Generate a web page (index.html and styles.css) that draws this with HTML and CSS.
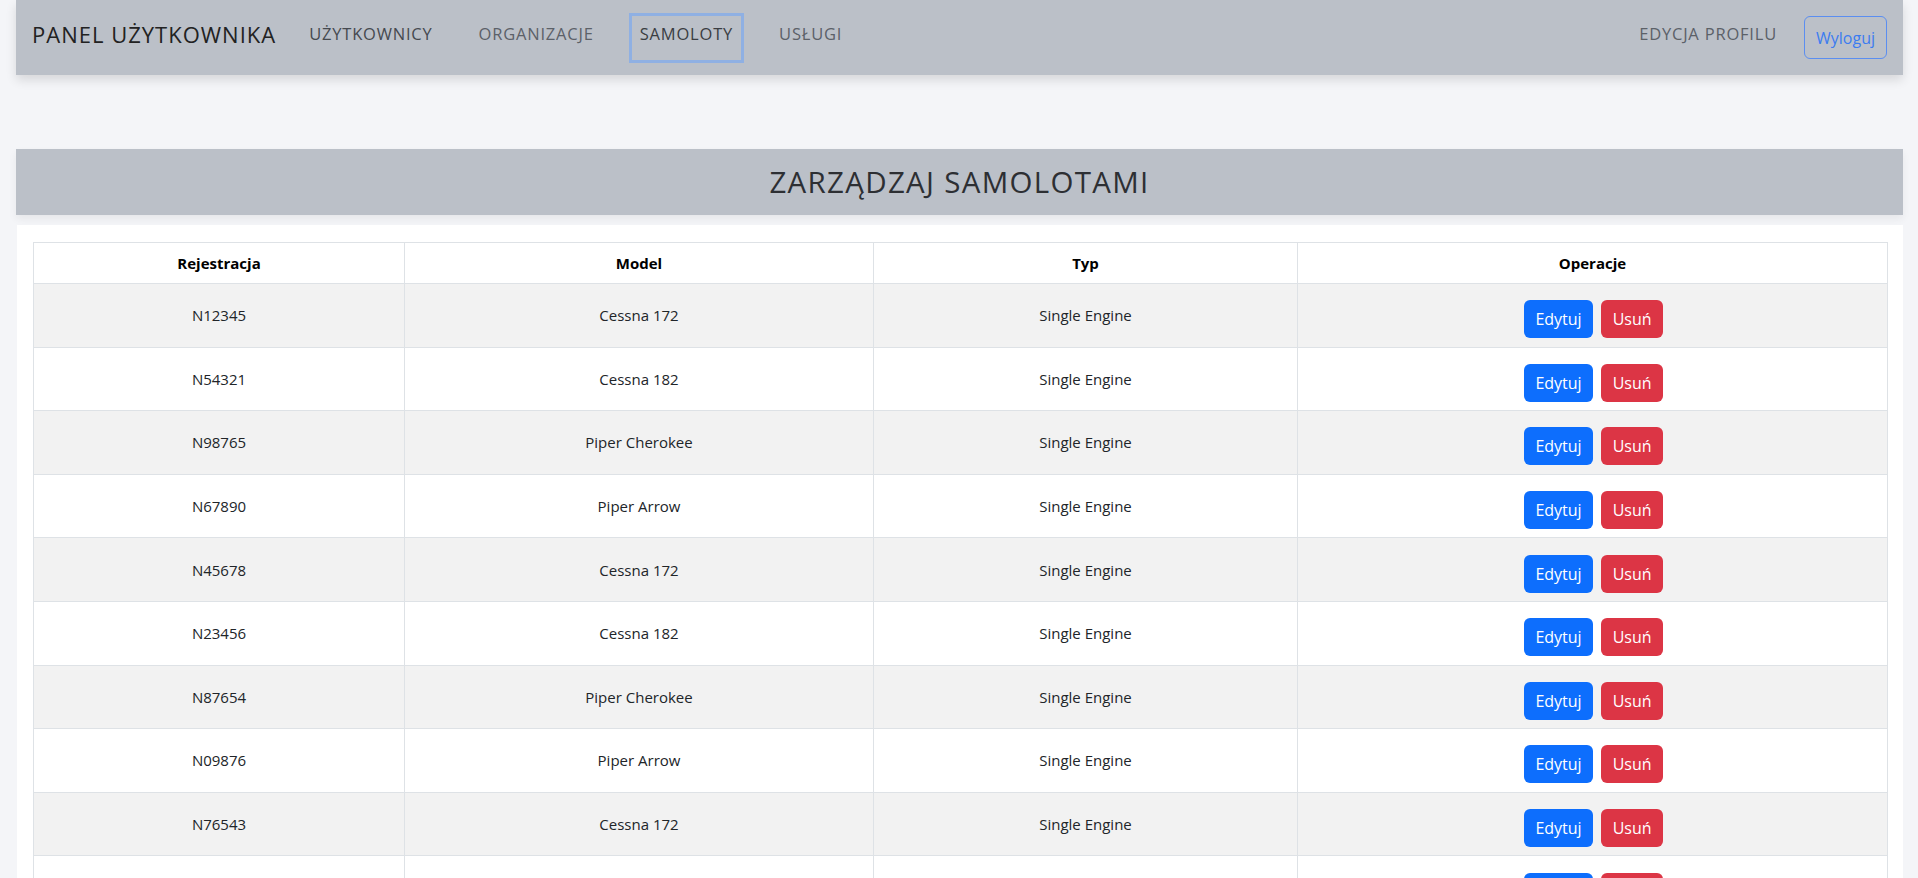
FILE: index.html
```html
<!DOCTYPE html>
<html lang="pl">
<head>
<meta charset="utf-8">
<title>Panel użytkownika</title>
<link rel="stylesheet" href="styles.css">
</head>
<body>
<div class="page">
  <nav class="navbar">
    <div class="nav-left">
      <span class="brand">PANEL UŻYTKOWNIKA</span>
      <a class="nav-link first">UŻYTKOWNICY</a>
      <a class="nav-link">ORGANIZACJE</a>
      <a class="nav-link active">SAMOLOTY</a>
      <a class="nav-link">USŁUGI</a>
    </div>
    <div class="nav-right">
      <a class="nav-link profile">EDYCJA PROFILU</a>
      <button class="logout">Wyloguj</button>
    </div>
  </nav>

  <header class="title-bar">
    <h1>ZARZĄDZAJ SAMOLOTAMI</h1>
  </header>

  <section class="card">
    <table class="planes">
      <colgroup>
        <col class="c1"><col class="c2"><col class="c3"><col class="c4">
      </colgroup>
      <thead>
        <tr><th>Rejestracja</th><th>Model</th><th>Typ</th><th>Operacje</th></tr>
      </thead>
      <tbody>
        <tr><td>N12345</td><td>Cessna 172</td><td>Single Engine</td><td><div class="ops"><button class="btn edit">Edytuj</button><button class="btn del">Usuń</button></div></td></tr>
        <tr><td>N54321</td><td>Cessna 182</td><td>Single Engine</td><td><div class="ops"><button class="btn edit">Edytuj</button><button class="btn del">Usuń</button></div></td></tr>
        <tr><td>N98765</td><td>Piper Cherokee</td><td>Single Engine</td><td><div class="ops"><button class="btn edit">Edytuj</button><button class="btn del">Usuń</button></div></td></tr>
        <tr><td>N67890</td><td>Piper Arrow</td><td>Single Engine</td><td><div class="ops"><button class="btn edit">Edytuj</button><button class="btn del">Usuń</button></div></td></tr>
        <tr><td>N45678</td><td>Cessna 172</td><td>Single Engine</td><td><div class="ops"><button class="btn edit">Edytuj</button><button class="btn del">Usuń</button></div></td></tr>
        <tr><td>N23456</td><td>Cessna 182</td><td>Single Engine</td><td><div class="ops"><button class="btn edit">Edytuj</button><button class="btn del">Usuń</button></div></td></tr>
        <tr><td>N87654</td><td>Piper Cherokee</td><td>Single Engine</td><td><div class="ops"><button class="btn edit">Edytuj</button><button class="btn del">Usuń</button></div></td></tr>
        <tr><td>N09876</td><td>Piper Arrow</td><td>Single Engine</td><td><div class="ops"><button class="btn edit">Edytuj</button><button class="btn del">Usuń</button></div></td></tr>
        <tr><td>N76543</td><td>Cessna 172</td><td>Single Engine</td><td><div class="ops"><button class="btn edit">Edytuj</button><button class="btn del">Usuń</button></div></td></tr>
        <tr><td>N65432</td><td>Cessna 182</td><td>Single Engine</td><td><div class="ops"><button class="btn edit">Edytuj</button><button class="btn del">Usuń</button></div></td></tr>
      </tbody>
    </table>
  </section>
</div>
</body>
</html>
```

FILE: styles.css
```css
* { box-sizing: border-box; }

body {
  margin: 0;
  background: #f4f5f8;
  font-family: "Open Sans", "Liberation Sans", sans-serif;
  color: #212529;
}

.page {
  padding: 0 15px 0 16px;
}

.navbar {
  height: 75px;
  background: #bbc0c8;
  display: flex;
  align-items: center;
  justify-content: space-between;
  padding: 0 16px 0 16px;
  box-shadow: 0 5px 10px rgba(0, 0, 0, 0.12);
}

.nav-left, .nav-right {
  display: flex;
  align-items: center;
}

.nav-left { gap: 24px; }

.brand {
  font-size: 22px;
  color: #222;
  letter-spacing: 1px;
  margin-right: -2px;
  padding-bottom: 8px;
  line-height: 30px;
}

.nav-link {
  font-size: 16.5px;
  color: #5c6168;
  letter-spacing: 0.8px;
  padding: 5px 8px 13px;
  border: 3px solid transparent;
  line-height: 26px;
}

.nav-link.first { color: #45494f; }

.nav-link.active {
  color: #3a3d42;
  border-color: #8fb0e3;
}

.nav-link.profile {
  margin-right: 16px;
}

.logout {
  font-family: "Open Sans", "Liberation Sans", sans-serif;
  font-size: 16px;
  color: #3b7cf0;
  background: transparent;
  border: 1px solid #5b8ef0;
  border-radius: 6px;
  height: 43px;
  padding: 0 11px;
}

.title-bar {
  margin-top: 74px;
  height: 66px;
  background: #bbc0c8;
  display: flex;
  align-items: center;
  justify-content: center;
  box-shadow: 0 4px 8px rgba(0, 0, 0, 0.06);
}

.title-bar h1 {
  margin: 0;
  font-weight: 400;
  font-size: 29.5px;
  color: #2d2f33;
  letter-spacing: 1.3px;
  margin-top: -2px;
}

.card {
  margin-top: 10px;
  background: #fff;
  padding: 17px 16px 0 16px;
  margin-left: 1px;
}

.planes {
  width: 100%;
  border-collapse: collapse;
  table-layout: fixed;
  font-size: 15px;
}

.c1 { width: 371px; }
.c2 { width: 469px; }
.c3 { width: 424px; }
.c4 { width: 590px; }

.planes th, .planes td {
  border: 1px solid #dee2e6;
  text-align: center;
  vertical-align: middle;
}

.planes th {
  font-weight: 700;
  color: #000;
  padding: 8px;
  height: 41px;
}

.planes td {
  height: 63.6px;
  padding: 0 8px;
}

.planes tbody tr:nth-child(odd) td {
  background: #f2f2f2;
}

.ops {
  display: flex;
  justify-content: center;
  gap: 8px;
  padding-left: 2px;
  padding-top: 8px;
}

.btn {
  font-family: "Open Sans", "Liberation Sans", sans-serif;
  font-size: 16px;
  color: #fff;
  border: 0;
  border-radius: 6px;
  height: 38px;
  padding: 0 11.5px;
}

.btn.edit { background: #0d6efd; }
.btn.del { background: #dc3545; }
```
